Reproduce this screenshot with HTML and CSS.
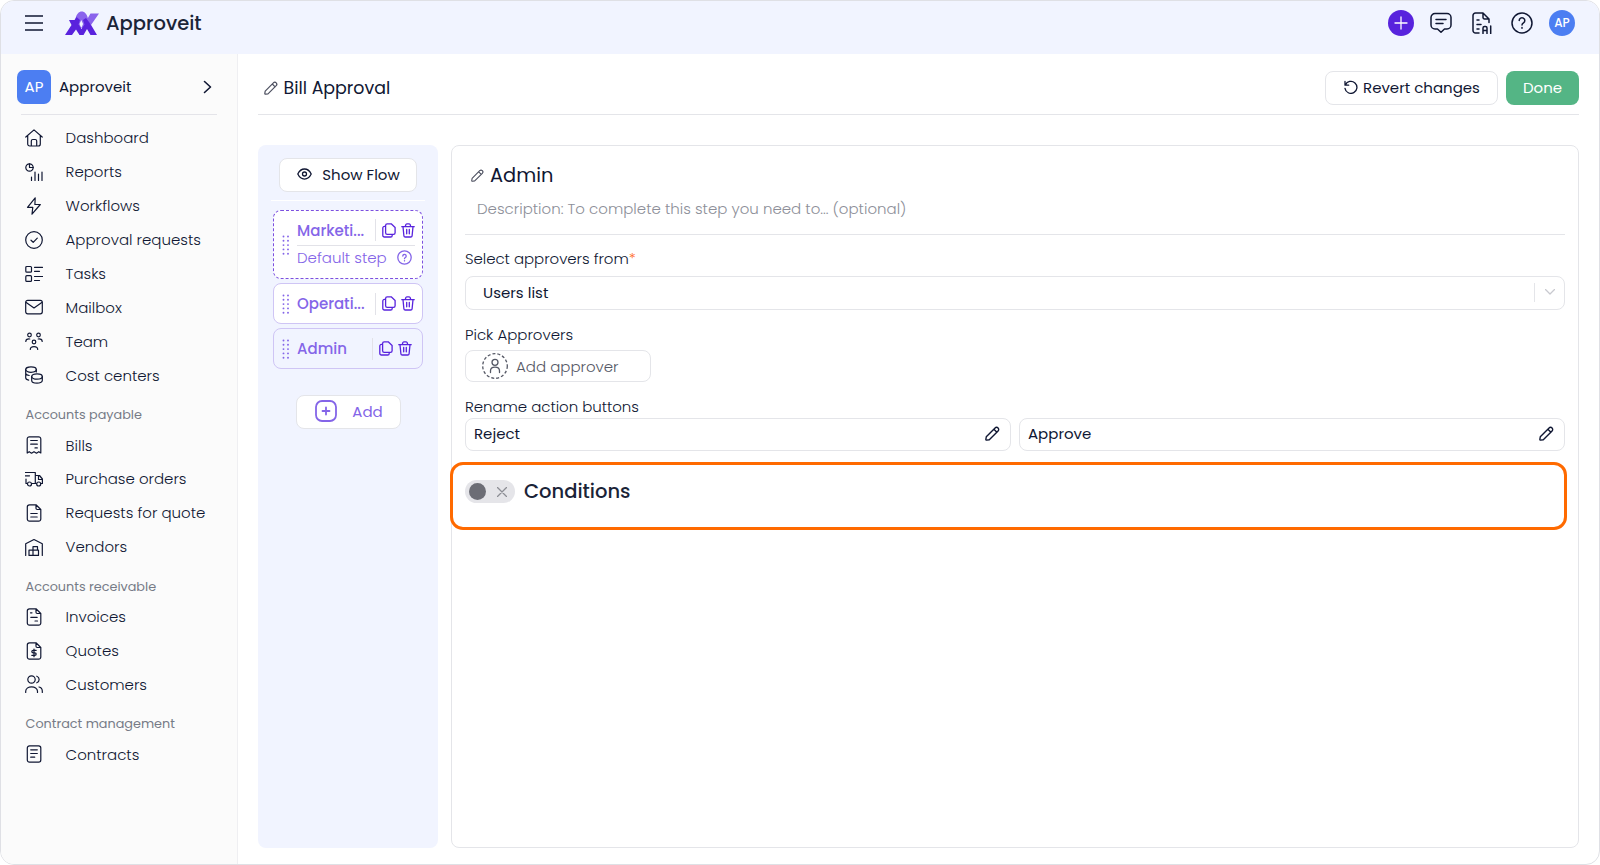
FILE: index.html
```html
<!DOCTYPE html>
<html lang="en">
<head>
    <meta charset="UTF-8">
    <meta name="viewport" content="width=device-width, initial-scale=1.0">
    <title>Approveit</title>
    <link rel="stylesheet" href="styles.css">
</head>
<body>
    <svg class="sprite">
        <symbol id="pencil" viewBox="0 0 14 14">
            <path d="M1.2 10.1 9.4 1.8a1.9 1.9 0 0 1 2.8 2.8L4 12.8l-2.4.4a.7.7 0 0 1-.8-.8zM8.3 3l2.8 2.8" />
        </symbol>
        <symbol id="copy" viewBox="0 0 14 15">
            <path d="M5.2.8h4l3.9 3.7v5.2a1.6 1.6 0 0 1-1.6 1.6H5.2a1.6 1.6 0 0 1-1.6-1.6V2.4A1.6 1.6 0 0 1 5.2.8zM3.6 3.4H2.4A1.6 1.6 0 0 0 .8 5v7.3A1.6 1.6 0 0 0 2.4 14h6.2a1.6 1.6 0 0 0 1.6-1.6v-1.1" />
        </symbol>
        <symbol id="trash" viewBox="0 0 14 15">
            <path d="M.8 3.7h12.4M2 3.7l.9 9.1a1.4 1.4 0 0 0 1.4 1.2h5.4a1.4 1.4 0 0 0 1.4-1.2l.9-9.1M4.3 3.5l.5-1.8a1.2 1.2 0 0 1 1.1-.9h2.2a1.2 1.2 0 0 1 1.1.9l.5 1.8M5.7 6.5v4.3M8.3 6.5v4.3" />
        </symbol>
        <symbol id="grip" viewBox="0 0 8 20">
            <path d="M1.5 1.5v.01M1.5 5.8v.01M1.5 10.1v.01M1.5 14.4v.01M1.5 18.7v.01M6 1.5v.01M6 5.8v.01M6 10.1v.01M6 14.4v.01M6 18.7v.01" />
        </symbol>
    </svg>

    <div class="app">
        <header class="topbar">
            <svg class="menu" width="18" height="16" viewBox="0 0 18 16"><path d="M0 1h18M0 8h18M0 15h18" /></svg>
            <svg class="logo" width="35" height="25" viewBox="0 0 35 25">
                <path fill="#8a63ec" d="M10.500 8c1.500-10 11-10 12.500 0l1.500 4-4 5h-8L9 12zM25.500 2.500h8.500L26 14l-4-5.500z" />
                <path fill="#5a22dd" d="M0 24 6.500 14 4 9h5.500l2-3 3.500 3-1.500 4.500L16.500 18l3-4.500L18 9l3-2 4.500 6 6.500 11h-6.500L22 18l-3.500 6h-4L11 18.500 7 24z" />
                <path fill="#f1f4ff" d="m16.300 9 1.800 4-1.800 4-1.800-4z" />
            </svg>
            <span class="brand">Approveit</span>
            <div class="actions">
                <span class="round plus"><svg width="14" height="14" viewBox="0 0 14 14"><path d="M7 1v12M1 7h12" /></svg></span>
                <svg class="comment" width="22" height="22" viewBox="0 0 22 22"><path d="M5 1.500h12a4 4 0 0 1 4 4V13a4 4 0 0 1-4 4h-2.500L11 20.300 7.500 17H5a4 4 0 0 1-4-4V5.500a4 4 0 0 1 4-4zM6 7.500h10M6 11.500h7" /></svg>
                <svg class="file-ai" width="22" height="22" viewBox="0 0 22 22"><path d="M8 21H4.500A2.500 2.500 0 0 1 2 18.500V3.500A2.500 2.500 0 0 1 4.500 1H12l6 6v3.500M12 1v4.500A1.500 1.500 0 0 0 13.500 7H18M6 8h2M6 12.500h4M6 17h2M12 21.500V16a1.500 1.500 0 0 1 1.500-1.500h1A1.500 1.500 0 0 1 16 16v5.500M12 18.500h4M19.700 14v7.500" /></svg>
                <svg class="help" width="22" height="22" viewBox="0 0 22 22"><circle cx="11" cy="11" r="10" /><path d="M8.200 8.500a2.800 2.800 0 1 1 4.300 2.400c-.9.600-1.500 1.100-1.500 2.100M11 15.600v.6" /></svg>
                <span class="round avatar">AP</span>
            </div>
        </header>

        <aside class="sidebar">
            <div class="workspace">
                <span class="badge">AP</span>
                <span class="workspace-name">Approveit</span>
                <svg width="9" height="14" viewBox="0 0 9 14"><path d="m1.500 1.500 6 5.500-6 5.500" /></svg>
            </div>
            <nav>
                <a><svg viewBox="0 0 18 18"><path d="M.8 8 9 .9 17.200 8M2.700 6.500V15a2 2 0 0 0 2 2h8.600a2 2 0 0 0 2-2V6.500M6.300 17v-5a1.500 1.500 0 0 1 1.500-1.500h2.400a1.500 1.500 0 0 1 1.500 1.500v5" /></svg>Dashboard</a>
                <a><svg viewBox="0 0 18 18"><circle cx="4.500" cy="4.500" r="3.700" /><path d="M4.500.8v3.700h3.700M6.500 14v3.500M10 9v8.500M13.500 11v6.500M17 9v8.500" /></svg>Reports</a>
                <a><svg viewBox="0 0 18 18"><path d="M10.200.8 2.500 10.300h5.300L7 17.200l8.300-9.700H9.900z" /></svg>Workflows</a>
                <a><svg viewBox="0 0 18 18"><circle cx="9" cy="9" r="8.300" /><path d="m6 9.200 2.200 2.100 4.100-4.200" /></svg>Approval requests</a>
                <a><svg viewBox="0 0 18 18"><rect x=".8" y="1.500" width="5.700" height="5.700" rx="1" /><rect x=".8" y="10.700" width="5.700" height="5.700" rx="1" /><path d="M9.500 2.300h8M9.500 6.300h5M9.500 11.500h8M9.500 15.500h5" /></svg>Tasks</a>
                <a><svg viewBox="0 0 18 18"><rect x=".7" y="2.300" width="16.600" height="13.500" rx="2" /><path d="M1.200 4.500 9 10l7.800-5.500" /></svg>Mailbox</a>
                <a><svg viewBox="0 0 18 18"><circle cx="4.500" cy="3" r="1.800" /><circle cx="13.500" cy="3" r="1.800" /><circle cx="9" cy="10" r="1.800" /><path d="M.8 9.500c0-2 1.500-2.800 4-2.500M17.200 9.500c0-2-1.500-2.800-4-2.500M5.300 17.500c0-2 1.400-2.900 3.700-2.900s3.700.9 3.700 2.900" /></svg>Team</a>
                <a><svg viewBox="0 0 18 18"><ellipse cx="6" cy="3.600" rx="5.300" ry="2.700" /><path d="M.7 3.600v8.200c0 1.200 1 2 3 2.400M11.300 3.600V6M.7 7.500c.4 1.200 1.600 1.800 3.500 2" /><ellipse cx="12" cy="10.500" rx="5.300" ry="2.700" /><path d="M6.700 10.500v4c0 3.600 10.600 3.600 10.600 0v-4" /></svg>Cost centers</a>

                <h4>Accounts payable</h4>
                <a><svg viewBox="0 0 18 18"><path d="M2.200 17V3a2.200 2.200 0 0 1 2.200-2.200h9.200A2.200 2.200 0 0 1 15.800 3v14l-2-1.300-2.300 1.500L9 15.700l-2.500 1.500-2.300-1.500zM5.700 4.500h6.600M5.700 8.200h6.600M10 11.900h2.300" /></svg>Bills</a>
                <a><svg viewBox="0 0 18 18"><path d="M0 2.500h10.300v11H7M0 5.800h4.500M1 9v4.500h1M10.300 5.500h4.200l2.900 3.500v4.500h-1.200M10.300 13.500h1M13.500 5.500v4h3.900" /><circle cx="4.500" cy="14" r="2" /><circle cx="13.700" cy="14" r="2" /></svg>Purchase orders</a>
                <a><svg viewBox="0 0 18 18"><path d="M4.500.8H11L15.800 5.500V15a2.200 2.200 0 0 1-2.200 2.200H4.500A2.200 2.200 0 0 1 2.300 15V3A2.200 2.200 0 0 1 4.500.8zM11 .8v3.500a1.200 1.200 0 0 0 1.200 1.200h3.600M5.800 9.500h6.400M5.800 13h6.400" /></svg>Requests for quote</a>
                <a><svg viewBox="0 0 18 18"><path d="M.7 17.500V5.800L9 1.500l8.300 4.300v11.700M4 17.500v-5.300h4M8 17.500V8.700h4.500v3.500M8 12.200h5.500v5.300M4 17.300h9.500" /></svg>Vendors</a>

                <h4>Accounts receivable</h4>
                <a><svg viewBox="0 0 18 18"><path d="M4.500.8H11L15.800 5.500V15a2.200 2.200 0 0 1-2.200 2.200H4.500A2.200 2.200 0 0 1 2.300 15V3A2.200 2.200 0 0 1 4.500.8zM11 .8v3.500a1.200 1.200 0 0 0 1.200 1.200h3.600M5.500 4.800h1.500M5.800 9.300h6.400M10 13h2.500" /></svg>Invoices</a>
                <a><svg viewBox="0 0 18 18"><path d="M4.500.8H11L15.800 5.500V15a2.200 2.200 0 0 1-2.200 2.200H4.500A2.200 2.200 0 0 1 2.300 15V3A2.200 2.200 0 0 1 4.500.8zM11 .8v3.500a1.200 1.200 0 0 0 1.200 1.200h3.600M11.200 8.300H8.300c-2 0-2 2.500 0 2.500h1.400c2 0 2 2.500 0 2.500H6.800M9 7v7.700" /></svg>Quotes</a>
                <a><svg viewBox="0 0 18 18"><circle cx="6.500" cy="4.500" r="3.700" /><path d="M11.800 1.200a3.500 3.500 0 0 1 0 6.600M.7 17.500v-1.200c0-6 11.800-6 11.800 0v1.200M14 12c2.200.5 3.300 1.800 3.300 4v1.500" /></svg>Customers</a>

                <h4>Contract management</h4>
                <a><svg viewBox="0 0 18 18"><rect x="2.300" y=".8" width="13.500" height="16.400" rx="2.200" /><path d="M5.700 4.800h6.600M5.700 8.500h6.600M5.700 12.200h4" /></svg>Contracts</a>
            </nav>
        </aside>

        <main>
            <div class="page-head">
                <svg class="pencil" width="14" height="14"><use href="#pencil" /></svg>
                <h1>Bill Approval</h1>
                <button class="btn revert"><svg width="14" height="14" viewBox="0 0 14 14"><path d="M1 1.500v3.700h3.700M1.400 5A6 6 0 1 1 1 8.300" /></svg>Revert changes</button>
                <button class="btn done">Done</button>
            </div>

            <div class="columns">
                <section class="flow">
                    <button class="btn show-flow"><svg width="15" height="12" viewBox="0 0 15 12"><path d="M.8 6C4 -.7 11 -.7 14.200 6 11 12.700 4 12.700.8 6z" /><circle cx="7.500" cy="6" r="2" /></svg>Show Flow</button>
                    <div class="steps">
                        <div class="step default">
                            <svg class="grip" width="8" height="20"><use href="#grip" /></svg>
                            <div class="step-body">
                                <div class="step-row">
                                    <b>Marketi...</b>
                                    <span class="tools"><svg width="14" height="15"><use href="#copy" /></svg><svg width="14" height="15"><use href="#trash" /></svg></span>
                                </div>
                                <div class="default-row">Default step <svg width="15" height="15" viewBox="0 0 15 15"><circle cx="7.500" cy="7.500" r="6.700" /><path d="M5.800 6.100a1.700 1.700 0 1 1 2.600 1.400c-.6.400-.9.600-.9 1.200M7.500 10.600v.3" /></svg></div>
                            </div>
                        </div>
                        <div class="step">
                            <svg class="grip" width="8" height="20"><use href="#grip" /></svg>
                            <div class="step-row">
                                <b>Operati...</b>
                                <span class="tools"><svg width="14" height="15"><use href="#copy" /></svg><svg width="14" height="15"><use href="#trash" /></svg></span>
                            </div>
                        </div>
                        <div class="step active">
                            <svg class="grip" width="8" height="20"><use href="#grip" /></svg>
                            <div class="step-row">
                                <b>Admin</b>
                                <span class="tools"><svg width="14" height="15"><use href="#copy" /></svg><svg width="14" height="15"><use href="#trash" /></svg></span>
                            </div>
                        </div>
                    </div>
                    <button class="btn add"><svg width="22" height="22" viewBox="0 0 22 22"><rect x="1" y="1" width="20" height="20" rx="6" /><path d="M11 7.500v7M7.500 11h7" /></svg>Add</button>
                </section>

                <section class="editor">
                    <div class="step-title">
                        <svg class="pencil" width="13" height="13" viewBox="0 0 14 14"><use href="#pencil" /></svg>
                        <h2>Admin</h2>
                    </div>
                    <p class="description">Description: To complete this step you need to... (optional)</p>

                    <label class="from-label">Select approvers from<i>*</i></label>
                    <div class="field select">
                        <span>Users list</span>
                        <svg width="10" height="6" viewBox="0 0 10 6"><path d="m.5.500 4.500 4.500L9.500.500" /></svg>
                    </div>

                    <label class="pick-label">Pick Approvers</label>
                    <div class="field picker">
                        <svg width="26" height="26" viewBox="0 0 26 26"><circle class="ring" cx="13" cy="13" r="12.300" /><circle cx="13" cy="9.300" r="3" /><path d="M8.500 19.500v-1.700c0-5 9-5 9 0v1.700" /></svg>
                        Add approver
                    </div>

                    <label class="rename-label">Rename action buttons</label>
                    <div class="renames">
                        <div class="field">Reject<svg width="15" height="15"><use href="#pencil" /></svg></div>
                        <div class="field">Approve<svg width="15" height="15"><use href="#pencil" /></svg></div>
                    </div>

                    <div class="conditions">
                        <span class="toggle"><span class="knob"></span><svg width="10" height="10" viewBox="0 0 10 10"><path d="m.5.500 9 9M9.500.500l-9 9" /></svg></span>
                        <h3>Conditions</h3>
                    </div>
                </section>
            </div>
        </main>
    </div>
</body>
</html>
```

FILE: styles.css
```css
* {
    box-sizing: border-box;
}
body {
    margin: 0;
    background: #fff;
    color: #101733;
    font-family: Poppins, Inter, sans-serif;
    font-size: 15px;
}
svg {
    flex: none;
    fill: none;
    stroke: currentColor;
    stroke-width: 1.3;
    stroke-linecap: round;
    stroke-linejoin: round;
}
.sprite {
    display: none;
}
h1, h2, h3, h4, p {
    margin: 0;
}
.app {
    display: grid;
    grid-template: 53px 1fr / 237px 1fr;
    width: 1600px;
    height: 865px;
    border: 1px solid #dfe0e5;
    border-radius: 14px;
    overflow: hidden;
}

/* top bar */
.topbar {
    grid-column: 1 / 3;
    display: flex;
    align-items: center;
    padding: 0 24px 9px;
    background: #f1f4ff;
}
.menu {
    stroke-width: 1.6;
    stroke-linecap: butt;
}
.logo {
    margin-left: 22px;
    stroke: none;
}
.brand {
    margin-left: 6px;
    color: #1b2438;
    font-size: 19.5px;
    font-weight: 500;
}
.actions {
    display: flex;
    align-items: center;
    margin-left: auto;
}
.comment, .file-ai, .help {
    stroke-width: 1.5;
}
.comment {
    margin-left: 16px;
}
.file-ai {
    margin-left: 19px;
}
.help {
    margin-left: 18px;
}
.round {
    display: flex;
    align-items: center;
    justify-content: center;
    width: 26px;
    height: 26px;
    border-radius: 50%;
    color: #fff;
    font-size: 12px;
    font-weight: 500;
}
.plus {
    background: #5823dd;
}
.avatar {
    margin-left: 16px;
    background: #4c7ef2;
}

/* sidebar */
.sidebar {
    padding: 16px 20px 0 16px;
    background: #fbfbfb;
    border-right: 1px solid #efeff2;
}
.workspace {
    display: flex;
    align-items: center;
    height: 34px;
}
.workspace svg {
    margin: 0 5px 0 auto;
    stroke-width: 1.6;
}
.workspace-name {
    margin-left: 8px;
    padding-bottom: 2px;
}
.badge {
    display: flex;
    align-items: center;
    justify-content: center;
    width: 34px;
    height: 34px;
    padding-bottom: 1px;
    border-radius: 7px;
    background: #4c7ef2;
    color: #fff;
}
nav {
    margin: 10px 0 0 4px;
    padding-top: 6px;
    border-top: 1px solid #e4e4e9;
}
nav a {
    display: flex;
    align-items: center;
    gap: 22.6px;
    height: 33.9px;
    padding-left: 4px;
    font-weight: 300;
    white-space: nowrap;
}
nav svg {
    width: 18px;
    height: 18px;
    stroke-width: 1.2;
}
nav h4 {
    height: 36px;
    padding: 14px 0 0 4.5px;
    color: #777b87;
    font-size: 12.8px;
    font-weight: 400;
    line-height: 17px;
}

/* page */
main {
    padding: 17px 20px 0;
}
.btn {
    display: flex;
    align-items: center;
    justify-content: center;
    height: 34px;
    padding: 0 0 2px;
    border: 1px solid #e4e5e9;
    border-radius: 8px;
    background: #fff;
    color: inherit;
    font: inherit;
}
.page-head {
    display: flex;
    height: 44px;
    border-bottom: 1px solid #e4e5e9;
}
.page-head .pencil {
    margin: 10px 5.5px 0 6px;
}
.pencil {
    color: #4d5060;
    stroke-width: 1.2;
}
.page-head h1 {
    margin-right: auto;
    font-size: 17.4px;
    font-weight: 400;
    line-height: 34px;
}
.revert {
    gap: 5px;
    width: 173px;
    padding-left: 1px;
}
.done {
    width: 73px;
    margin-left: 8px;
    border: 0;
    background: #54b585;
    color: #fff;
}
.columns {
    display: flex;
    gap: 13px;
    height: 703px;
    margin-top: 30px;
}

/* flow steps */
.flow {
    display: flex;
    flex-direction: column;
    align-items: center;
    width: 180px;
    padding: 13px 13px 0;
    border-radius: 8px;
    background: #f1f4ff;
}
.show-flow {
    gap: 10px;
    width: 138px;
    flex: none;
    padding-left: 1px;
}
.steps {
    width: 154px;
    margin-top: 8px;
    padding: 9px 2px 0;
    border-top: 1px solid #fff;
}
.step {
    display: flex;
    align-items: center;
    height: 41px;
    margin-bottom: 4px;
    padding: 0 7px 0 8px;
    border: 1px solid #cfc5f5;
    border-radius: 8px;
    background: #fff;
    color: #8465e8;
}
.grip {
    margin-right: 7px;
    stroke-width: 1.9;
}
.step-row {
    display: flex;
    flex: 1;
    align-items: center;
    justify-content: space-between;
}
.step b {
    font-size: 15px;
    font-weight: 500;
}
.tools {
    display: flex;
    align-items: center;
    gap: 5px;
    height: 22px;
    padding-left: 6px;
    border-left: 1px solid #e2e2e8;
    color: #5823dd;
}
.default {
    height: 69px;
    border: 1px dashed #7c50df;
}
.step-body {
    flex: 1;
}
.default-row {
    display: flex;
    align-items: center;
    justify-content: space-between;
    height: 26px;
    margin-top: 3px;
    padding: 0 3px 1px 0;
    border-top: 1px solid #e2e2e8;
    font-weight: 300;
    white-space: nowrap;
}
.active {
    padding-right: 10px;
    background: #f1f4ff;
}
.add {
    flex: none;
    gap: 15px;
    width: 105px;
    margin-top: 22px;
    padding-left: 2px;
    color: #8465e8;
}
.add svg {
    stroke-width: 1.8;
}

/* step editor */
.editor {
    flex: 1;
    padding: 14px 13px 0;
    border: 1px solid #e4e5e9;
    border-radius: 8px;
}
.step-title {
    display: flex;
    align-items: center;
    gap: 6px;
    height: 30px;
    padding-left: 6px;
}
.step-title h2 {
    font-size: 19.4px;
    font-weight: 400;
}
.description {
    height: 45px;
    padding: 8px 12px 0;
    border-bottom: 1px solid #e4e5e9;
    color: #8d8f99;
    font-weight: 300;
    line-height: 22px;
}
label {
    display: block;
    font-weight: 300;
    line-height: 20px;
}
label i {
    color: #ff6a1c;
    font-style: normal;
}
.from-label {
    margin-top: 14px;
    letter-spacing: -0.05px;
}
.pick-label {
    margin-top: 15px;
}
.rename-label {
    margin-top: 15px;
    letter-spacing: -0.05px;
}
.field {
    display: flex;
    align-items: center;
    height: 33px;
    padding: 0 10px 2px 8px;
    border: 1px solid #e4e5e9;
    border-radius: 8px;
}
.select {
    height: 34px;
    margin-top: 7px;
    padding: 0 9px 2px 17px;
}
.select span {
    flex: 1;
    margin-right: 10px;
    border-right: 1px solid #e4e5e9;
    line-height: 19px;
}
.select svg {
    color: #c8c9cf;
}
.picker {
    gap: 8px;
    width: 186px;
    height: 32px;
    margin-top: 5px;
    padding: 0 0 0 16px;
    color: #565966;
    font-weight: 300;
}
.ring {
    stroke-dasharray: 3 2;
    stroke-linecap: butt;
}
.renames {
    display: grid;
    grid-template-columns: 1fr 1fr;
    gap: 8px;
    margin-top: 1px;
}
.renames svg {
    margin-left: auto;
}
.conditions {
    display: flex;
    gap: 9px;
    height: 68px;
    margin: 11px -2px 0 -15px;
    padding: 15px 0 0 12px;
    border: 3px solid #ff6a00;
    border-radius: 13px;
}
.toggle {
    display: flex;
    align-items: center;
    justify-content: space-between;
    width: 50px;
    height: 23px;
    padding: 0 8px 0 4px;
    border-radius: 12px;
    background: #e5e5e9;
    color: #8c8d94;
}
.knob {
    width: 17px;
    height: 17px;
    border-radius: 50%;
    background: #6c6d75;
}
.conditions h3 {
    color: #1b2438;
    font-size: 19.5px;
    font-weight: 500;
    line-height: 23px;
}
```
